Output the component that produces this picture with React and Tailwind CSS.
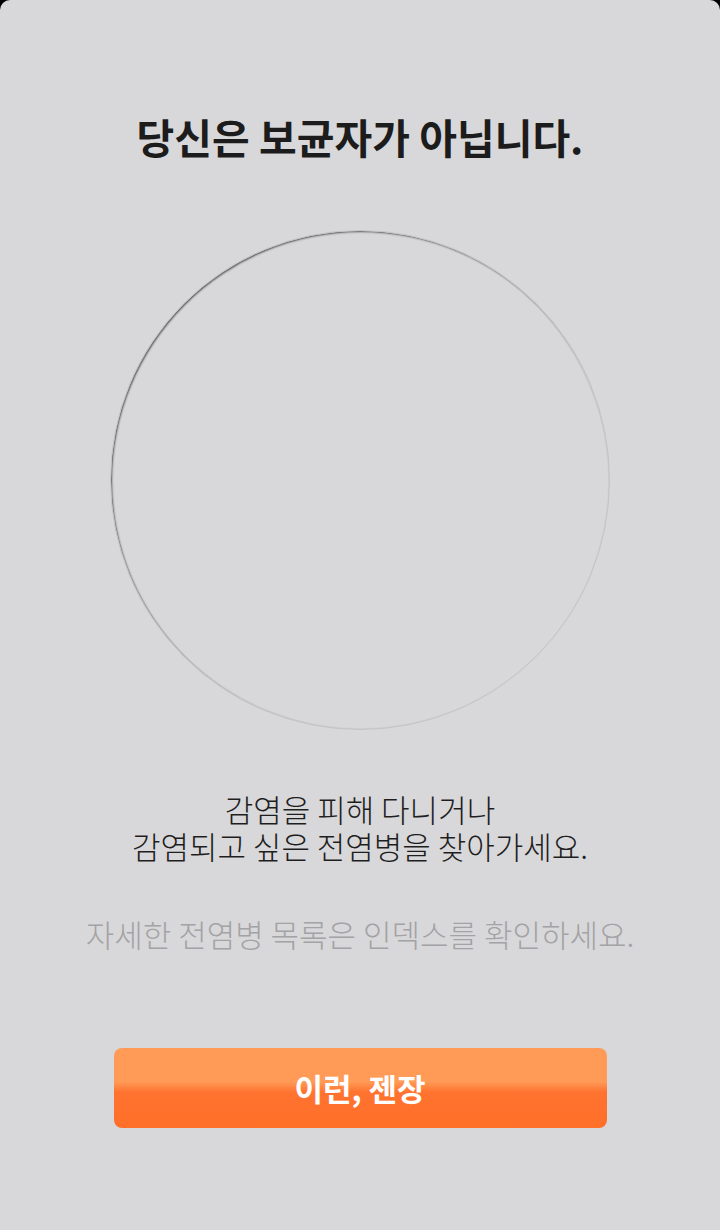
import React from 'react';

const font = { fontFamily: '"Noto Sans CJK KR", "Noto Sans", sans-serif' };

const App = () => {
  return (
    <div className="w-[720px] h-[1230px] bg-black" style={font}>
      <div className="h-full bg-[#d8d8da] rounded-t-[10px] flex flex-col items-center pt-[110px]">
        <h1 className="text-[41px] leading-[52px] font-bold text-[#1c1c1c]">당신은 보균자가 아닙니다.</h1>

        <div className="mt-[68px] w-[500px] h-[500px] rounded-full border border-[#c4c4c6] shadow-[inset_1px_1px_2px_rgba(0,0,0,0.6)]" />

        <div className="mt-[60px] flex flex-col items-center text-[31px] leading-[37px] font-light text-[#1e1e1e]">
          <span>감염을 피해 다니거나</span>
          <span>감염되고 싶은 전염병을 찾아가세요.</span>
        </div>

        <p className="mt-[51px] text-[31px] leading-[37px] font-light text-[#a3a3a5] text-center whitespace-nowrap">
          자세한 전염병 목록은 인덱스를 확인하세요.
        </p>

        <button className="mt-[96px] w-[493px] h-[80px] rounded-[8px] bg-[linear-gradient(to_bottom,#ff9b57_0%,#ff9b57_42%,#ff7330_55%,#ff6f28_100%)] text-white text-[31px] font-bold">
          이런, 젠장
        </button>
      </div>
    </div>
  );
};

export default App;
